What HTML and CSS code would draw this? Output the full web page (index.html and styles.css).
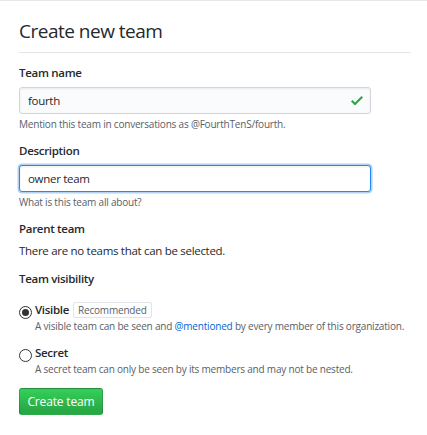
FILE: index.html
```html
<!DOCTYPE html>
<html lang="en">
<head>
<meta charset="utf-8">
<title>Create new team</title>
<link rel="stylesheet" href="styles.css">
</head>
<body>
<div class="page">
  <div class="subhead">
    <h2 class="subhead-heading">Create new team</h2>
  </div>
  <form class="team-form">
    <div class="form-group">
      <label class="form-label">Team name</label>
      <div class="input-wrap">
        <input class="form-control" type="text" value="fourth">
        <svg class="check" viewBox="0 3.5 12 9.5" width="12" height="9.5" aria-hidden="true"><path d="M12 5l-8 8-4-4 1.5-1.5L4 10l6.5-6.5L12 5z"/></svg>
      </div>
      <p class="note">Mention this team in conversations as <strong class="mention">@FourthTenS/fourth</strong>.</p>
    </div>
    <div class="form-group">
      <label class="form-label">Description</label>
      <input class="form-control focus" type="text" value="owner team">
      <p class="note">What is this team all about?</p>
    </div>
    <div class="form-group">
      <label class="form-label">Parent team</label>
      <p class="plain">There are no teams that can be selected.</p>
    </div>
    <div class="form-group vis">
      <label class="form-label">Team visibility</label>
      <div class="radio-item first">
        <div class="radio-row">
          <span class="radio checked"></span>
          <span class="radio-label">Visible</span>
          <span class="badge">Recommended</span>
        </div>
        <p class="note radio-note">A visible team can be seen and <a class="link" href="#">@mentioned</a> by every member of this organization.</p>
      </div>
      <div class="radio-item">
        <div class="radio-row">
          <span class="radio"></span>
          <span class="radio-label">Secret</span>
        </div>
        <p class="note radio-note">A secret team can only be seen by its members and may not be nested.</p>
      </div>
    </div>
    <button class="btn-primary" type="button">Create team</button>
  </form>
</div>
</body>
</html>
```

FILE: styles.css
```css
html, body {
  margin: 0;
  padding: 0;
  background: #fff;
}
body {
  font-family: "Open Sans", "Noto Sans", sans-serif;
  color: #24292e;
  font-size: 11.5px;
  letter-spacing: -0.3px;
  border-top: 1px solid #e6e8eb;
}
.page {
  padding: 0 16px 0 19px;
}
.subhead {
  padding-top: 17px;
  padding-bottom: 8px;
  border-bottom: 1px solid #e1e4e8;
  margin-bottom: 12px;
}
.subhead-heading {
  margin: 0;
  font-size: 19px;
  letter-spacing: -0.5px;
  line-height: 26px;
  font-weight: 400;
}
.form-group {
  margin-bottom: 12px;
}
.form-label {
  display: block;
  font-weight: 600;
  font-size: 11.5px;
  line-height: 16px;
  margin-bottom: 6px;
}
.input-wrap {
  position: relative;
  width: 352px;
}
.form-control {
  display: block;
  box-sizing: border-box;
  width: 352px;
  height: 27px;
  margin: 0;
  padding: 0 8px;
  font-family: inherit;
  font-size: 11.5px;
  letter-spacing: -0.3px;
  color: #24292e;
  background: #fafbfc;
  border: 1px solid #d1d5da;
  border-radius: 3px;
  box-shadow: inset 0 1px 2px rgba(27,31,35,0.075);
  outline: none;
}
.form-control.focus {
  background: #fff;
  border-color: #2188ff;
  box-shadow: inset 0 1px 2px rgba(27,31,35,0.075), 0 0 0 1.5px rgba(3,102,214,0.3);
}
.check {
  position: absolute;
  right: 8px;
  top: 9px;
  fill: #28a745;
}
.note {
  margin: 3px 0 0;
  font-size: 10px;
  letter-spacing: -0.2px;
  line-height: 14px;
  color: #586069;
}
.mention {
  font-weight: 400;
}
.plain {
  margin: 0;
  font-size: 11.5px;
  line-height: 16px;
}
.vis .form-label {
  margin-bottom: 15px;
}
.radio-item {
  padding-left: 16px;
  margin-bottom: 12px;
}
.radio-row {
  display: flex;
  align-items: center;
  height: 16px;
  margin-left: -16px;
}
.radio {
  box-sizing: border-box;
  width: 13px;
  height: 13px;
  border: 1px solid #333;
  border-radius: 50%;
  margin-top: 4px;
  margin-right: 3px;
  background: #fff;
  display: flex;
  align-items: center;
  justify-content: center;
}
.radio.checked::after {
  content: "";
  width: 7px;
  height: 7px;
  border-radius: 50%;
  background: #333;
}
.radio-label {
  font-weight: 600;
  font-size: 11.5px;
  line-height: 16px;
}
.badge {
  margin-left: 4px;
  padding: 0 4px;
  font-size: 10px;
  letter-spacing: -0.2px;
  line-height: 14px;
  color: #586069;
  border: 1px solid #e1e4e8;
  border-radius: 2px;
}
.radio-note {
  margin: 1px 0 0;
}
.link {
  color: #0366d6;
  text-decoration: none;
}
.btn-primary {
  display: block;
  box-sizing: border-box;
  width: 84px;
  height: 27px;
  padding: 0;
  font-family: inherit;
  font-size: 12px;
  letter-spacing: -0.15px;
  color: #fff;
  border: 1px solid rgba(27,31,35,0.2);
  border-radius: 3px;
  background: linear-gradient(-180deg, #34d058 0%, #28a745 90%);
  margin-top: 1px;
}
```
